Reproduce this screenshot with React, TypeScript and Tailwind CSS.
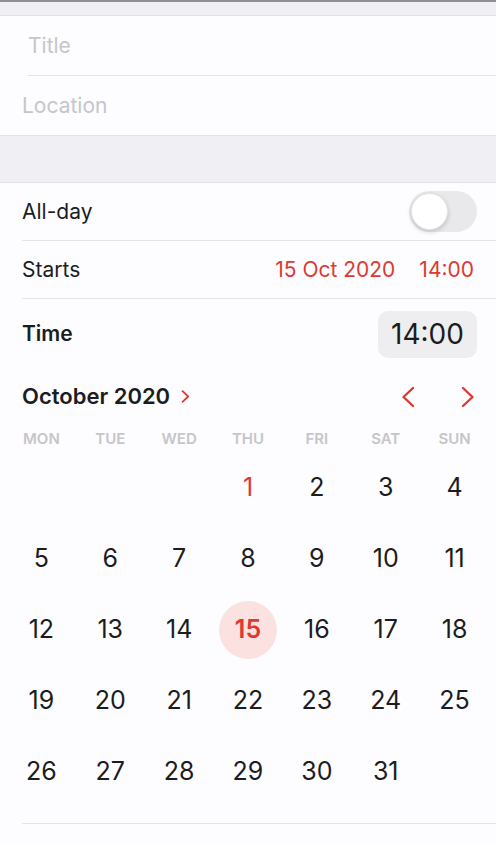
import React from "react";

const RED = "text-[#dc3a30]";

function Chevron({ dir, className, w = 2.4 }: { dir: "left" | "right"; className?: string; w?: number }) {
  return (
    <svg viewBox="0 0 14 22" className={className} fill="none" stroke="#dc3a30" strokeWidth={w} strokeLinecap="round" strokeLinejoin="round">
      {dir === "left" ? <path d="M12 2 L2.5 11 L12 20" /> : <path d="M2 2 L11.5 11 L2 20" />}
    </svg>
  );
}

export default function App() {
  const days: (number | null)[] = [null, null, null];
  for (let i = 1; i <= 31; i++) days.push(i);
  while (days.length < 35) days.push(null);
  const weekdays = ["MON", "TUE", "WED", "THU", "FRI", "SAT", "SUN"];

  return (
    <div className="w-[496px] h-[844px] overflow-hidden bg-[#fdfcfe] text-[#1c1c1e]" style={{ fontFamily: "Inter, 'Noto Sans', sans-serif" }}>
      <div className="h-[2px] bg-[#8f8f92]" />
      <div className="h-[14px] bg-[#efeff4] border-b border-[#e2e2e6]" />
      <div className="bg-[#fdfcfe]">
        <div className="h-[59px] flex items-center pl-[28px] text-[21px] text-[#c6c6ca]">Title</div>
        <div className="ml-[28px] h-px bg-[#e4e4e8]" />
        <div className="h-[59px] flex items-center pl-[22px] text-[21px] text-[#c6c6ca]">Location</div>
      </div>
      <div className="h-px bg-[#e2e2e6]" />
      <div className="h-[46px] bg-[#efeff4]" />
      <div className="h-px bg-[#e2e2e6]" />
      <div className="bg-[#fdfcfe]">
        <div className="h-[57px] flex items-center justify-between pl-[22px] pr-[19px]">
          <span className="text-[21px]">All-day</span>
          <div className="w-[68px] h-[41px] rounded-full bg-[#e9e9eb] p-[2px] flex items-center">
            <div className="w-[37px] h-[37px] rounded-full bg-white shadow-[0_2px_5px_rgba(0,0,0,0.18)] border border-[#e4e4e6]" />
          </div>
        </div>
        <div className="ml-[22px] h-px bg-[#e4e4e8]" />
        <div className="h-[57px] flex items-center justify-between pl-[22px] pr-[22px]">
          <span className="text-[21px]">Starts</span>
          <div className={`flex gap-[24px] text-[21px] ${RED}`}>
            <span>15 Oct 2020</span>
            <span>14:00</span>
          </div>
        </div>
        <div className="ml-[22px] h-px bg-[#e4e4e8]" />
        <div className="h-[70px] flex items-center justify-between pl-[22px] pr-[19px]">
          <span className="text-[21px] font-semibold">Time</span>
          <div className="w-[99px] h-[47px] rounded-[10px] bg-[#eeeef0] flex items-center justify-center text-[28px]">14:00</div>
        </div>
        <div className="h-[55px] flex items-center justify-between pl-[22px] pr-[21px]">
          <div className="flex items-center gap-[11px]">
            <span className="text-[22px] font-semibold">October 2020</span>
            <Chevron dir="right" w={3} className="w-[9px] h-[13px]" />
          </div>
          <div className="flex items-center gap-[46px]">
            <Chevron dir="left" className="w-[14px] h-[22px]" />
            <Chevron dir="right" className="w-[14px] h-[22px]" />
          </div>
        </div>
        <div className="grid grid-cols-7 px-[7px] h-[28px] pt-[2px] items-center">
          {weekdays.map((w) => (
            <div key={w} className="text-center text-[15px] font-semibold text-[#c6c6c9]">{w}</div>
          ))}
        </div>
        <div className="grid grid-cols-7 px-[7px]">
          {days.map((d, i) => (
            <div key={i} className="h-[71px] flex items-center justify-center">
              {d === 15 ? (
                <div className={`w-[58px] h-[58px] rounded-full bg-[#fbe2e0] flex items-center justify-center text-[25px] font-semibold ${RED}`}>15</div>
              ) : d === 1 ? (
                <span className={`text-[25px] ${RED}`}>1</span>
              ) : d ? (
                <span className="text-[25px]">{d}</span>
              ) : null}
            </div>
          ))}
        </div>
        <div className="h-[16px]" />
        <div className="ml-[22px] h-px bg-[#e4e4e8]" />
      </div>
    </div>
  );
}
